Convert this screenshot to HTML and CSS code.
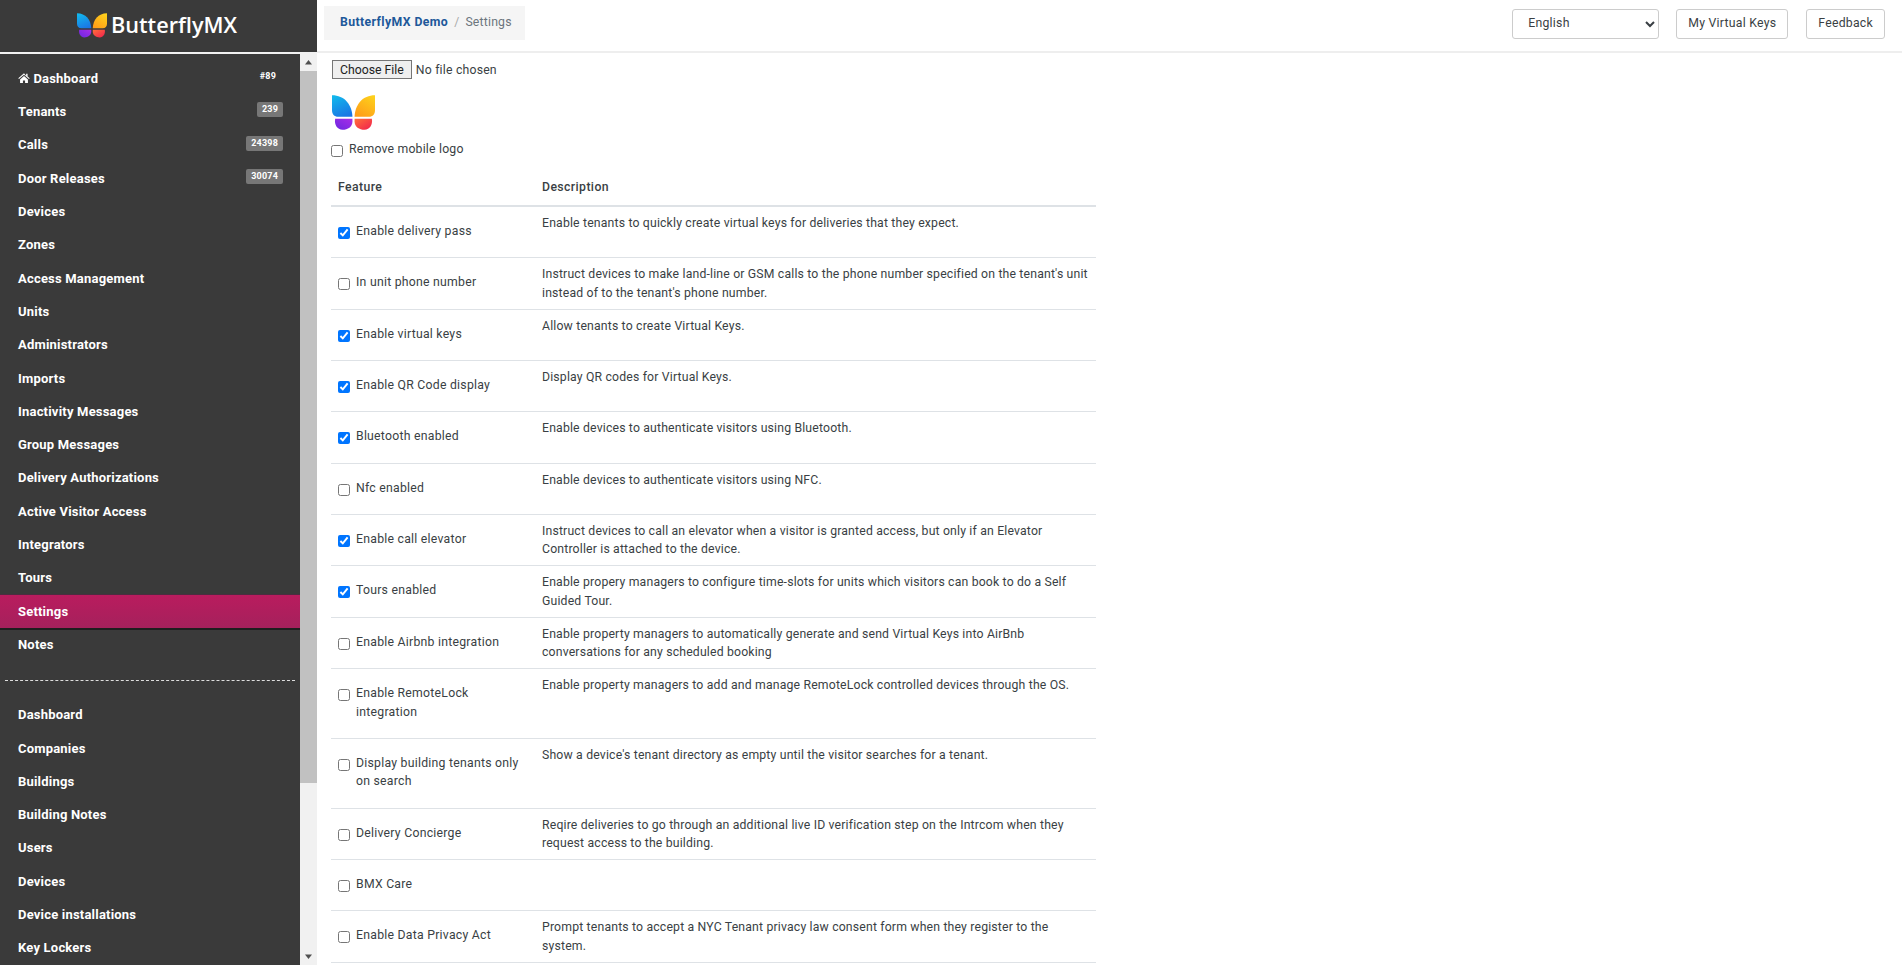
FILE: index.html
```html
<!DOCTYPE html>
<html lang="en">
<head>
<meta charset="utf-8">
<title>ButterflyMX Settings</title>
<link rel="stylesheet" href="styles.css">
</head>
<body>
<svg class="defs" width="0" height="0">
<defs>
<linearGradient id="gtl" x1="0.300" y1="0" x2="0.700" y2="1"><stop offset="0" stop-color="#12b6ec"/><stop offset="1" stop-color="#1b74e4"/></linearGradient>
<linearGradient id="gtr" x1="0.800" y1="0" x2="0.200" y2="1"><stop offset="0" stop-color="#fdd01c"/><stop offset="1" stop-color="#ff9c18"/></linearGradient>
<linearGradient id="gbl" x1="1" y1="0" x2="0" y2="1"><stop offset="0" stop-color="#a82ce8"/><stop offset="1" stop-color="#6a28e0"/></linearGradient>
<linearGradient id="gbr" x1="0" y1="0" x2="1" y2="1"><stop offset="0" stop-color="#ff6e3a"/><stop offset="1" stop-color="#f01f4f"/></linearGradient>
<symbol id="fly" viewBox="0 0 41 34">
<path fill="url(#gtl)" d="M0 1C12 1 19 10 19.500 21.500H6C2 21.500 0 19 0 15Z"/>
<path fill="url(#gtr)" d="M41 1C29 1 22 10 21.500 21.500H35C39 21.500 41 19 41 15Z"/>
<path fill="url(#gbl)" d="M3 23.500H19.500V26C19.500 31 15 34 10 34C5 34 2 29 3 23.500Z"/>
<path fill="url(#gbr)" d="M38 23.500H21.500V26C21.500 31 26 34 31 34C36 34 39 29 38 23.500Z"/>
</symbol>
</defs>
</svg>
<div class="app">
  <aside class="side">
    <div class="brand">
      <svg class="brand-mark"><use href="#fly"/></svg>
      <span class="brand-name">ButterflyMX</span>
    </div>
    <div class="side-body">
      <nav class="nav">
        <a class="nav-item"><span class="nav-label"><svg class="home" viewBox="0 0 16 14"><path d="M8 0.500 0 7.300l1 1.100L8 2.500l7 5.900 1-1.100-3-2.500V1h-2v2.700ZM2.500 9v5h4v-3.500h3V14h4V9L8 4.300Z"/></svg> Dashboard</span><span class="badge-plain">#89</span></a>
        <a class="nav-item"><span class="nav-label">Tenants</span><span class="badge">239</span></a>
        <a class="nav-item"><span class="nav-label">Calls</span><span class="badge">24398</span></a>
        <a class="nav-item"><span class="nav-label">Door Releases</span><span class="badge">30074</span></a>
        <a class="nav-item"><span class="nav-label">Devices</span></a>
        <a class="nav-item"><span class="nav-label">Zones</span></a>
        <a class="nav-item"><span class="nav-label">Access Management</span></a>
        <a class="nav-item"><span class="nav-label">Units</span></a>
        <a class="nav-item"><span class="nav-label">Administrators</span></a>
        <a class="nav-item"><span class="nav-label">Imports</span></a>
        <a class="nav-item"><span class="nav-label">Inactivity Messages</span></a>
        <a class="nav-item"><span class="nav-label">Group Messages</span></a>
        <a class="nav-item"><span class="nav-label">Delivery Authorizations</span></a>
        <a class="nav-item"><span class="nav-label">Active Visitor Access</span></a>
        <a class="nav-item"><span class="nav-label">Integrators</span></a>
        <a class="nav-item"><span class="nav-label">Tours</span></a>
        <a class="nav-item nav-active"><span class="nav-label">Settings</span></a>
        <a class="nav-item"><span class="nav-label">Notes</span></a>
        <div class="nav-divider"></div>
        <a class="nav-item"><span class="nav-label">Dashboard</span></a>
        <a class="nav-item"><span class="nav-label">Companies</span></a>
        <a class="nav-item"><span class="nav-label">Buildings</span></a>
        <a class="nav-item"><span class="nav-label">Building Notes</span></a>
        <a class="nav-item"><span class="nav-label">Users</span></a>
        <a class="nav-item"><span class="nav-label">Devices</span></a>
        <a class="nav-item"><span class="nav-label">Device installations</span></a>
        <a class="nav-item"><span class="nav-label">Key Lockers</span></a>
      </nav>
      <div class="sbar">
        <svg class="sbar-arrow" viewBox="0 0 17 17"><path d="M8.500 6 5 10.500h7Z"/></svg>
        <div class="sbar-track"><div class="sbar-thumb"></div></div>
        <svg class="sbar-arrow" viewBox="0 0 17 17"><path d="M8.500 11 5 6.500h7Z"/></svg>
      </div>
    </div>
  </aside>
  <div class="main">
    <header class="top">
      <div class="crumbs"><a class="crumb-link">ButterflyMX Demo</a><span class="crumb-sep">/</span><span class="crumb-cur">Settings</span></div>
      <div class="top-actions">
        <select class="lang"><option>English</option></select>
        <button class="btn">My Virtual Keys</button>
        <button class="btn">Feedback</button>
      </div>
    </header>
    <div class="content">
      <input class="file" type="file">
      <svg class="mobile-logo"><use href="#fly"/></svg>
      <label class="remove"><input type="checkbox"><span>Remove mobile logo</span></label>
      <table class="features">
        <thead><tr><th class="col-a">Feature</th><th>Description</th></tr></thead>
        <tbody>
          <tr><td class="feat"><label class="feat-label"><input type="checkbox" checked><span>Enable delivery pass</span></label></td><td>Enable tenants to quickly create virtual keys for deliveries that they expect.</td></tr>
          <tr><td class="feat"><label class="feat-label"><input type="checkbox"><span>In unit phone number</span></label></td><td>Instruct devices to make land-line or GSM calls to the phone number specified on the tenant's unit instead of to the tenant's phone number.</td></tr>
          <tr><td class="feat"><label class="feat-label"><input type="checkbox" checked><span>Enable virtual keys</span></label></td><td>Allow tenants to create Virtual Keys.</td></tr>
          <tr><td class="feat"><label class="feat-label"><input type="checkbox" checked><span>Enable QR Code display</span></label></td><td>Display QR codes for Virtual Keys.</td></tr>
          <tr><td class="feat"><label class="feat-label"><input type="checkbox" checked><span>Bluetooth enabled</span></label></td><td>Enable devices to authenticate visitors using Bluetooth.</td></tr>
          <tr><td class="feat"><label class="feat-label"><input type="checkbox"><span>Nfc enabled</span></label></td><td>Enable devices to authenticate visitors using NFC.</td></tr>
          <tr><td class="feat"><label class="feat-label"><input type="checkbox" checked><span>Enable call elevator</span></label></td><td>Instruct devices to call an elevator when a visitor is granted access, but only if an Elevator Controller is attached to the device.</td></tr>
          <tr><td class="feat"><label class="feat-label"><input type="checkbox" checked><span>Tours enabled</span></label></td><td>Enable propery managers to configure time-slots for units which visitors can book to do a Self Guided Tour.</td></tr>
          <tr><td class="feat"><label class="feat-label"><input type="checkbox"><span>Enable Airbnb integration</span></label></td><td>Enable property managers to automatically generate and send Virtual Keys into AirBnb conversations for any scheduled booking</td></tr>
          <tr><td class="feat"><label class="feat-label"><input type="checkbox"><span>Enable RemoteLock integration</span></label></td><td>Enable property managers to add and manage RemoteLock controlled devices through the OS.</td></tr>
          <tr><td class="feat"><label class="feat-label"><input type="checkbox"><span>Display building tenants only on search</span></label></td><td>Show a device's tenant directory as empty until the visitor searches for a tenant.</td></tr>
          <tr><td class="feat"><label class="feat-label"><input type="checkbox"><span>Delivery Concierge</span></label></td><td>Reqire deliveries to go through an additional live ID verification step on the Intrcom when they request access to the building.</td></tr>
          <tr><td class="feat"><label class="feat-label"><input type="checkbox"><span>BMX Care</span></label></td><td></td></tr>
          <tr><td class="feat"><label class="feat-label"><input type="checkbox"><span>Enable Data Privacy Act</span></label></td><td>Prompt tenants to accept a NYC Tenant privacy law consent form when they register to the system.</td></tr>
        </tbody>
      </table>
    </div>
  </div>
</div>
</body>
</html>
```
FILE: styles.css
```css
* { box-sizing: border-box; }
html, body { margin: 0; height: 100%; overflow: hidden; }
body { font-family: Roboto, "Liberation Sans", sans-serif; font-size: 12.25px; line-height: 1.5; letter-spacing: 0.2px; color: #3a3f44; background: #fff; }
.defs { display: block; height: 0; }
.app { display: flex; height: 965px; }

.side { width: 317px; flex: none; display: flex; flex-direction: column; }
.brand { height: 54px; flex: none; background: #3a3a3a; border-bottom: 2px solid #f2f2f2; display: flex; align-items: center; justify-content: center; gap: 4px; padding: 0 3px 2px 0; }
.brand-mark { width: 30px; height: 28px; }
.brand-name { font-family: "Open Sans", sans-serif; font-weight: 600; font-size: 21.700px; line-height: 1; letter-spacing: 0; color: #fff; }
.side-body { flex: 1; display: flex; min-height: 0; }
.nav { width: 300px; background: #3a3a3a; overflow: hidden; padding-top: 8px; }
.nav-item { display: flex; justify-content: space-between; align-items: center; height: 33.300px; padding: 0 17px 0 18px; color: #fff; font-weight: 700; font-size: 13px; }
.nav-label { white-space: nowrap; }
.home { width: 12px; height: 10px; fill: #fff; }
.nav-active { height: 36.300px; margin: -1px 0 -2px 0; background: linear-gradient(#b91c5e, #a5215c); border-bottom: 2px solid #1e1e1e; border-top: 1px solid #4e2c40; }
.badge { background: #777; color: #fff; font-size: 9px; font-weight: 700; line-height: 1; padding: 3px 5px; border-radius: 2px; margin-top: -4px; }
.badge-plain { color: #fff; font-size: 9px; font-weight: 700; line-height: 1; padding: 3px 4px; margin-top: -5px; margin-right: 3px; }
.nav-divider { border-top: 1px dashed #ddd; margin: 19px 5px 17px 5px; height: 0; }
.sbar { width: 17px; background: #f1f1f1; display: flex; flex-direction: column; }
.sbar-arrow { width: 17px; height: 17px; flex: none; fill: #505050; }
.sbar-track { flex: 1; }
.sbar-thumb { height: 712px; background: #c1c1c1; }

.main { flex: 1; min-width: 0; display: flex; flex-direction: column; }
.top { height: 53px; flex: none; display: flex; justify-content: space-between; align-items: flex-start; border-bottom: 2px solid #eeeeee; padding: 6px 17px 0 7px; }
.crumbs { height: 34px; background: #f5f5f5; display: flex; align-items: center; gap: 6px; padding: 0 13px 2px 16px; }
.crumb-link { color: #20589a; font-weight: 700; letter-spacing: 0.4px; }
.crumb-sep { color: #aaa; }
.crumb-cur { color: #6c757d; }
.top-actions { display: flex; align-items: center; gap: 18px; padding-top: 3px; }
.lang { width: 147px; height: 30px; margin-right: -1px; border: 1px solid #ccc; border-radius: 3px; background: #fff; padding: 0 11px 2px 11px; font-family: inherit; font-size: 12.25px; letter-spacing: 0.25px; color: #3a3f44; }
.btn { height: 30px; border: 1px solid #ccc; border-radius: 3px; background: #fff; padding: 0 11px 2px 11px; font-family: inherit; font-size: 12.25px; letter-spacing: 0.25px; color: #3a3f44; }

.content { padding: 7px 0 0 14px; overflow: hidden; display: flex; flex-direction: column; align-items: flex-start; }
.file { font-family: inherit; font-size: 12.25px; letter-spacing: 0.2px; height: 19px; margin-left: 1px; color: #3a3f44; }
.file::file-selector-button { height: 19px; padding: 0 7px; margin-right: 4px; border: 1px solid #767676; border-radius: 0; background: #efefef; font: inherit; color: #222; }
.mobile-logo { width: 43px; height: 38px; margin-top: 14px; margin-left: 1px; }
.remove { display: flex; align-items: flex-start; gap: 6px; margin-top: 9px; }
.remove input { width: 12px; height: 12px; margin: 5px 0 0 0; flex: none; }
.features { width: 765px; border-collapse: collapse; margin-top: 11px; }
.features th { text-align: left; font-weight: 500; letter-spacing: 0.4px; padding: 9px 7px 8px 7px; border-bottom: 2px solid #dee2e6; }
.features td { vertical-align: top; letter-spacing: 0.17px; padding: 7px 3px 6px 7px; border-bottom: 1px solid #dee2e6; }
.col-a { width: 204px; }
.features td.feat { letter-spacing: 0.25px; padding: 15px 10px 17px 7px; }
.feat-label { display: flex; align-items: flex-start; gap: 6px; }
.feat-label input { width: 12px; height: 12px; margin: 5px 0 0 0; flex: none; }
```
